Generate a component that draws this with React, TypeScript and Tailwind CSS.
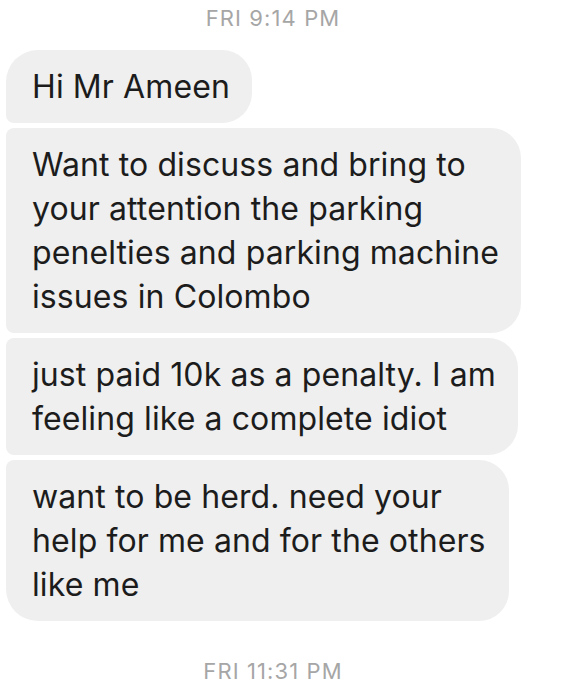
const messages = [
  { lines: ["Hi Mr Ameen"], width: "w-[246px]", corners: "rounded-tl-[32px] rounded-bl-[8px]" },
  {
    lines: [
      "Want to discuss and bring to",
      "your attention the parking",
      "penelties and parking machine",
      "issues in Colombo",
    ],
    width: "w-[515px]",
    corners: "rounded-tl-[8px] rounded-bl-[8px]",
  },
  {
    lines: ["just paid 10k as a penalty. I am", "feeling like a complete idiot"],
    width: "w-[512px]",
    corners: "rounded-tl-[8px] rounded-bl-[8px]",
  },
  {
    lines: ["want to be herd. need your", "help for me and for the others", "like me"],
    width: "w-[503px]",
    corners: "rounded-tl-[8px] rounded-bl-[32px]",
  },
]

export default function App() {
  return (
    <div className="min-h-screen w-[569px] bg-white font-['Inter',sans-serif] pt-[8px]">
      <div className="w-[546px] text-center text-[22px] leading-[21px] tracking-[1.1px] text-[#a6a6a6]">FRI 9:14 PM</div>

      {/* Message group */}
      <div className="mt-[21px] flex flex-col gap-[5px] pl-[6px]">
        {messages.map((m, i) => (
          <div
            key={i}
            className={`${m.width} ${m.corners} rounded-r-[30px] bg-[#efefef] pl-[26px] pt-[15px] pb-[14px] text-[32px] leading-[44px] tracking-[0.1px] text-[#1c1c1c]`}
          >
            {m.lines.map((line, j) => (
              <div key={j} className="whitespace-nowrap">
                {line}
              </div>
            ))}
          </div>
        ))}
      </div>

      <div className="mt-[40px] w-[546px] text-center text-[22px] leading-[21px] tracking-[1.1px] text-[#a6a6a6]">FRI 11:31 PM</div>
    </div>
  )
}
